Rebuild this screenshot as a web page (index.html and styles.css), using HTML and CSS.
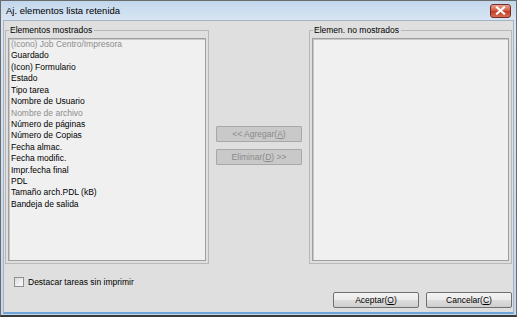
FILE: index.html
```html
<!DOCTYPE html>
<html lang="es">
<head>
<meta charset="utf-8">
<title>Aj. elementos lista retenida</title>
<link rel="stylesheet" href="styles.css">
</head>
<body>
<div class="window">
  <div class="titlebar">
    <span class="title">Aj. elementos lista retenida</span>
    <span class="close"><svg width="11" height="9" viewBox="0 0 11 9"><path d="M2 1.5 L9 7.5 M9 1.5 L2 7.5" stroke="#fff" stroke-width="2.2" stroke-linecap="square"/></svg></span>
  </div>
  <div class="client">
    <div class="main">
      <fieldset class="group">
        <legend>Elementos mostrados</legend>
        <ul class="list">
          <li class="dim">(Icono) Job Centro/Impresora</li>
          <li>Guardado</li>
          <li>(Icon) Formulario</li>
          <li>Estado</li>
          <li>Tipo tarea</li>
          <li>Nombre de Usuario</li>
          <li class="dim">Nombre de archivo</li>
          <li>Número de páginas</li>
          <li>Número de Copias</li>
          <li>Fecha almac.</li>
          <li>Fecha modific.</li>
          <li>Impr.fecha final</li>
          <li>PDL</li>
          <li>Tamaño arch.PDL (kB)</li>
          <li>Bandeja de salida</li>
        </ul>
      </fieldset>
      <div class="mid">
        <button class="btn disabled">&lt;&lt; Agregar(<u>A</u>)</button>
        <button class="btn disabled">Eliminar(<u>D</u>) &gt;&gt;</button>
      </div>
      <fieldset class="group">
        <legend>Elemen. no mostrados</legend>
        <ul class="list"></ul>
      </fieldset>
    </div>
    <label class="check"><span class="box"></span>Destacar tareas sin imprimir</label>
    <div class="footer">
      <button class="btn">Aceptar(<u>O</u>)</button>
      <button class="btn">Cancelar(<u>C</u>)</button>
    </div>
  </div>
</div>
</body>
</html>
```
FILE: styles.css
```css
* { box-sizing: border-box; }
html, body { margin: 0; padding: 0; background: #fff; }
body { font-family: "Liberation Sans", Arial, sans-serif; font-size: 8.5px; color: #000; }
.window {
  width: 517px; height: 317px;
  border: 1px solid #6b6b6b;
  border-bottom: 2px solid #3a3a3a;
  background: linear-gradient(#c2d7ec, #d9e6f3 20px, #c4d6ea);
  display: flex; flex-direction: column;
  padding: 0 2px 1px 2px;
}
.titlebar {
  height: 19px; flex: none;
  display: flex; align-items: center; justify-content: space-between;
  padding: 0 3px 0 3px;
}
.title { font-size: 9.5px; color: #000; }
.close {
  width: 21px; height: 14px; margin-top: 0;
  border: 1px solid #7a2b22; border-radius: 3px;
  background: linear-gradient(#e8a593, #d1543c 50%, #c13a22 51%, #d46f58);
  display: flex; align-items: center; justify-content: center;
}
.client {
  flex: 1; background: #dfdfdf;
  border: 1px solid #a4b4c6;
  border-bottom: 2px solid #6fa3d6;
  display: flex; flex-direction: column;
  padding: 0 1px 0 1px;
}
.main {
  display: grid; grid-template-columns: 204px 1fr 203px;
  height: 243px;
}
.group {
  margin: 4px 0 0 0; padding: 3px 2px 2px 2px;
  border: 1px solid #b8b8b8;
  display: flex; min-width: 0;
}
.group legend { padding: 0 2px 0 1px; margin-left: 1px; font-size: 8.5px; line-height: 10px; }
.list {
  list-style: none; margin: 0; padding: 0 2px;
  flex: 1; background: #f0f0f0;
  border: 1px solid #9f9f9f;
  box-shadow: inset 1px 1px 0 #c8c8c8;
}
.list li { line-height: 11.43px; height: 11.43px; white-space: nowrap; }
.list li.dim { color: #8d8d8d; }
.mid {
  display: flex; flex-direction: column; align-items: center;
  padding-top: 105px; gap: 7px;
}
.btn {
  font-family: inherit; font-size: 8.5px; color: #000;
  width: 86px; height: 16px; padding: 0;
  border: 1px solid #707070; border-radius: 2px;
  background: linear-gradient(#f2f2f2, #ebebeb 50%, #dddddd 51%, #cfcfcf);
}
.btn u { text-decoration: underline; }
.btn.disabled {
  color: #8a8a8a; background: #c9c9c9; border-color: #a8a8a8; border-radius: 1px;
}
.check {
  display: flex; align-items: center; gap: 4px;
  margin: 13px 0 0 9px; height: 10px;
}
.box {
  width: 10px; height: 10px; border: 1px solid #8e8f8f;
  background: linear-gradient(135deg, #dcdcdc, #fbfbfb);
}
.footer {
  display: flex; justify-content: flex-end; gap: 7px;
  margin-top: 5px; padding-right: 0;
}
```
